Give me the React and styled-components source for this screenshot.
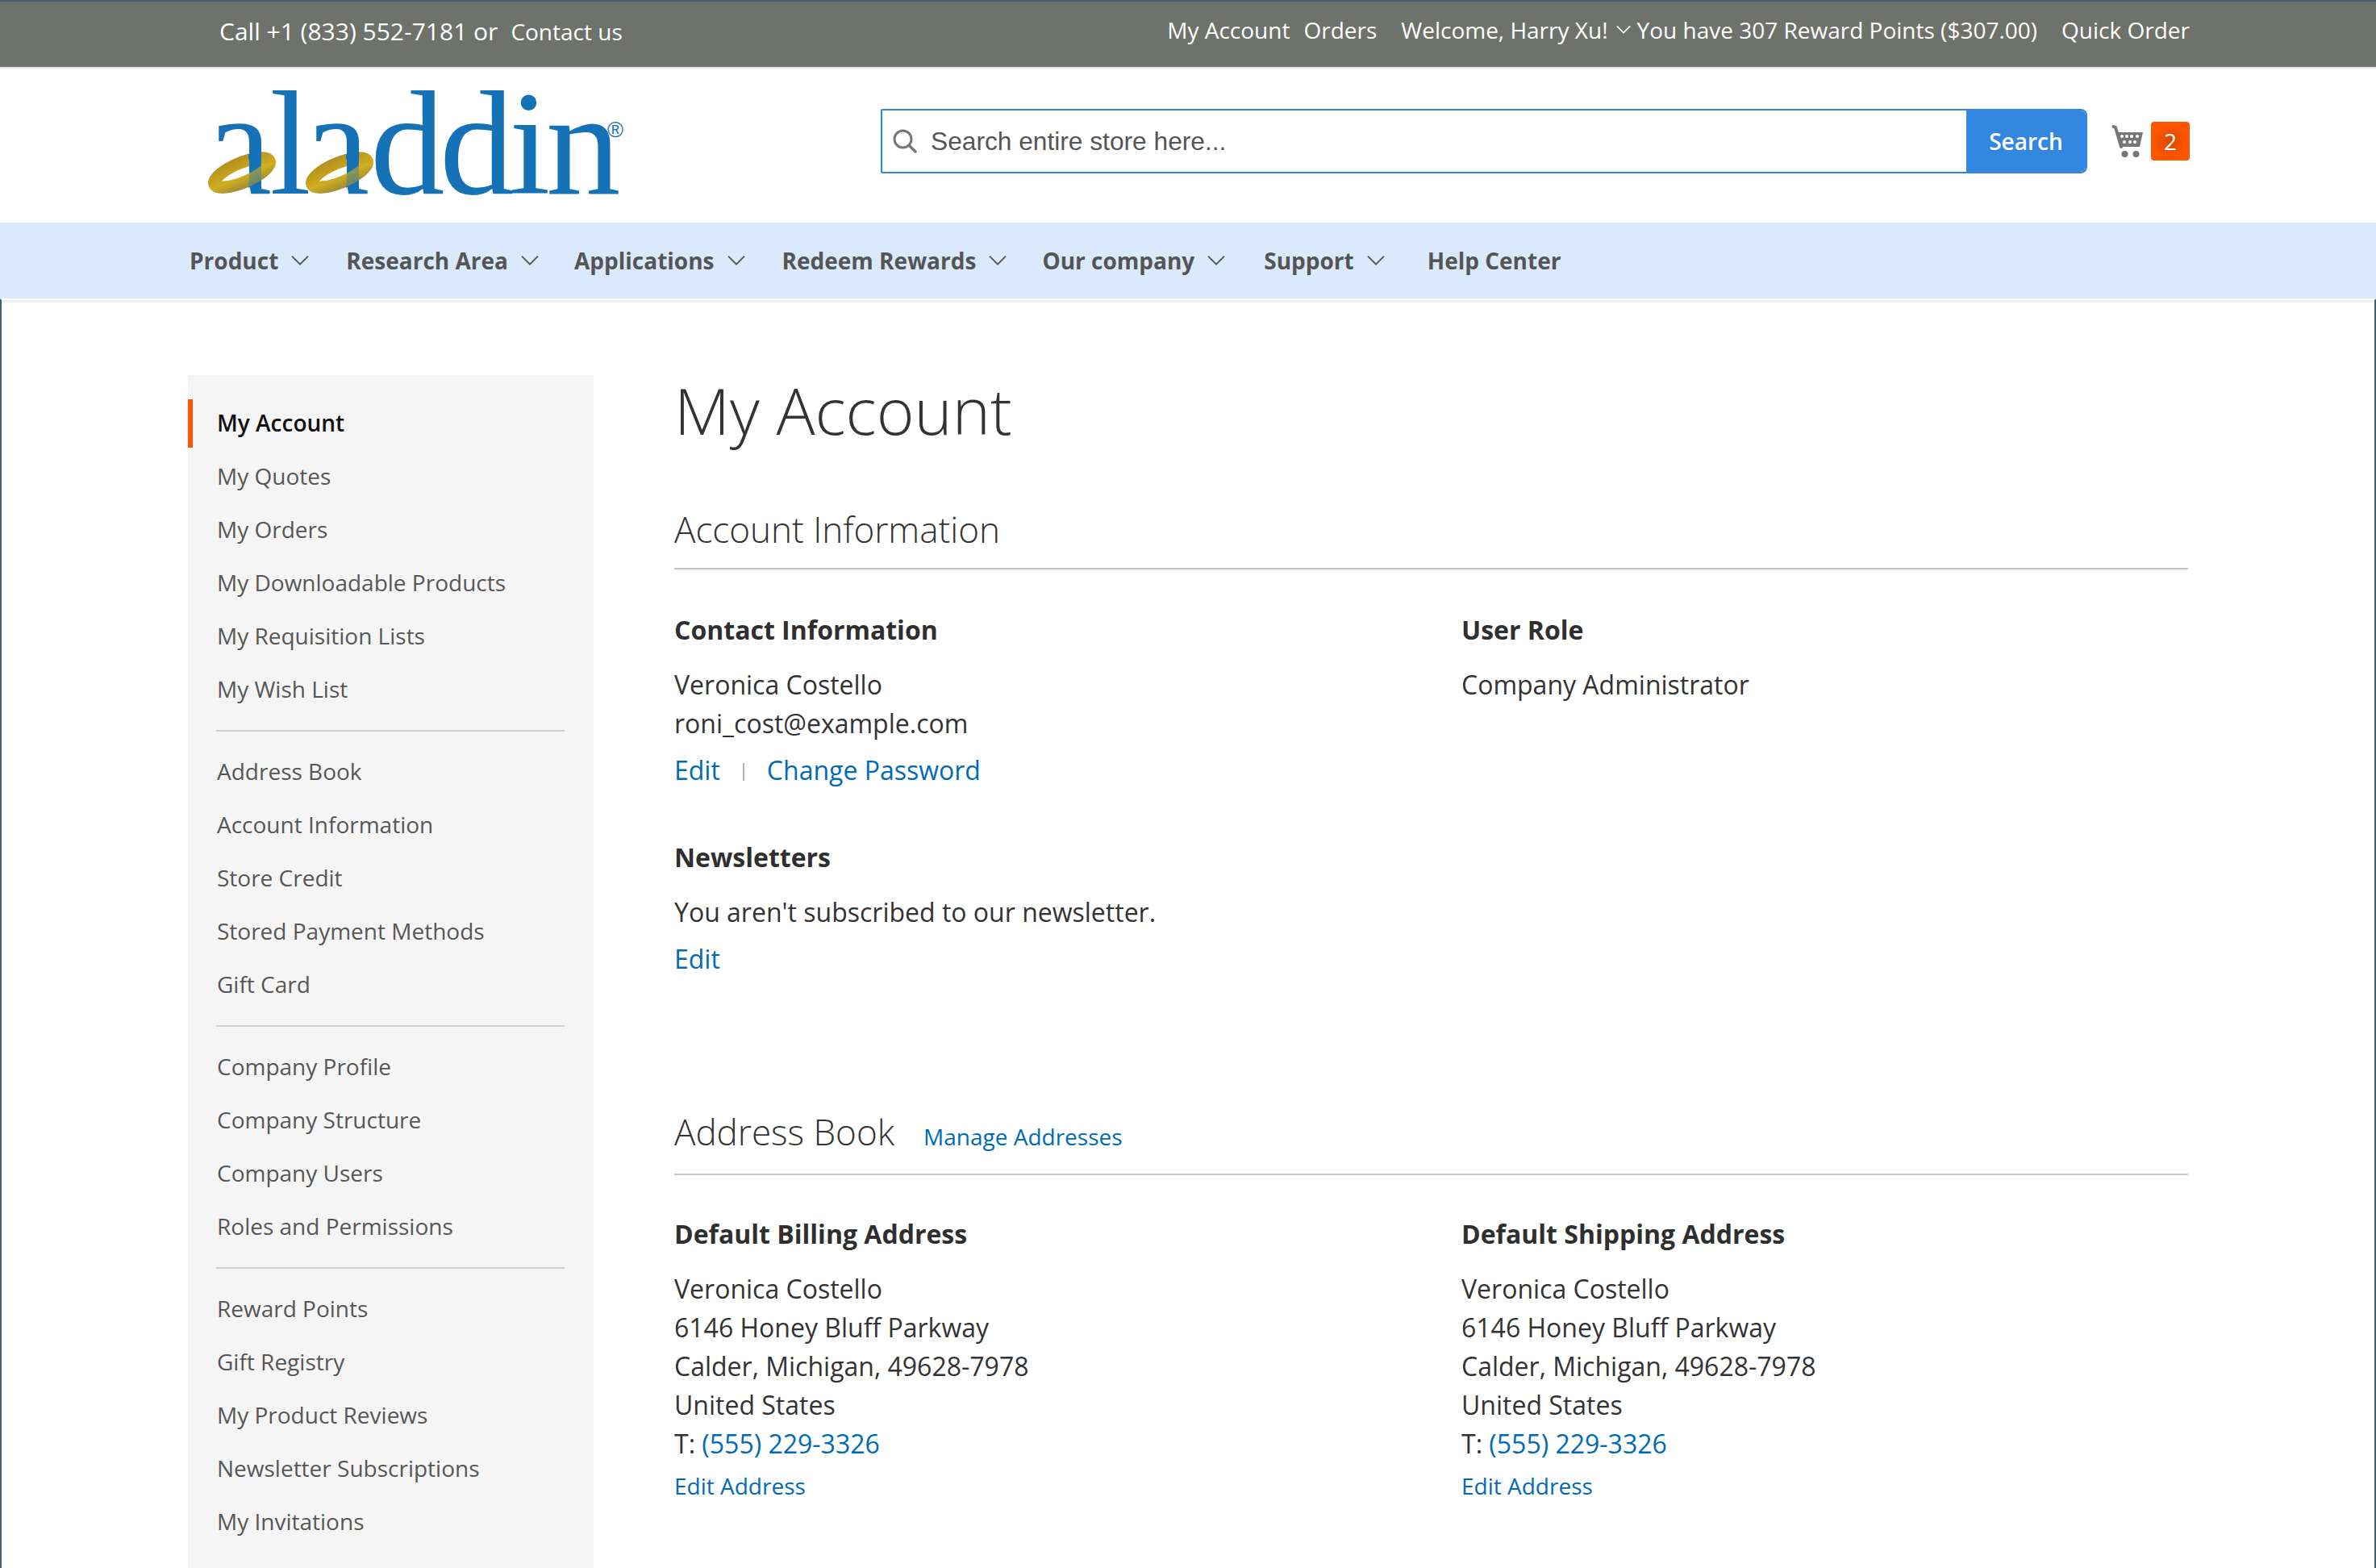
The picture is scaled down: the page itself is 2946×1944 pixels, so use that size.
import React from "react";
import styled, { createGlobalStyle } from "styled-components";

const GlobalStyle = createGlobalStyle`
  html, body {
    margin: 0;
    padding: 0;
    background: #fff;
    font-family: "Open Sans", "Liberation Sans", sans-serif;
    color: #333;
  }
  * { box-sizing: border-box; }
  a { text-decoration: none; }
`;

const Page = styled.div`
  width: 2946px;
  height: 1944px;
  overflow: hidden;
`;

const TopBar = styled.div`
  height: 85px;
  background: #6f716d;
  border-top: 2px solid #44606f;
  border-bottom: 2px solid #e9eae8;
  display: flex;
  align-items: center;
  justify-content: space-between;
  padding: 0 231px 8px 272px;
  color: #fff;
  font-size: 28px;
`;

const TopGroup = styled.div`
  display: flex;
  align-items: center;
  gap: ${(p) => p.$gap || 0}px;
`;

const TopLinks = styled(TopGroup)`
  margin-bottom: 4px;
`;

const Phone = styled.span`
  font-size: 30px;
  margin-right: 16px;
`;

const Points = styled.span`
  margin-left: 8px;
`;

const Header = styled.div`
  height: 191px;
  display: flex;
  align-items: flex-start;
  padding: 0 231px 0 250px;
`;

const LogoBox = styled.div`
  width: 530px;
  margin-right: 312px;
  flex: none;
`;

const SearchForm = styled.div`
  margin-top: 50px;
  width: 1496px;
  flex: none;
  height: 80px;
  display: flex;
  border: 2px solid #3487de;
  border-radius: 2px 8px 8px 2px;
  overflow: hidden;
`;

const SearchField = styled.div`
  flex: 1;
  display: flex;
  align-items: center;
  gap: 17px;
  padding: 0 13px;
  font-family: "Liberation Sans", Arial, sans-serif;
  font-size: 31.7px;
  color: #555;
`;

const SearchButton = styled.div`
  width: 148px;
  background: #3487de;
  color: #fff;
  font-size: 28px;
  font-weight: 600;
  display: flex;
  align-items: center;
  justify-content: center;
`;

const Cart = styled.div`
  margin-top: 66px;
  margin-left: 30px;
  display: flex;
  align-items: center;
  gap: 7px;
`;

const Badge = styled.div`
  width: 48px;
  height: 48px;
  background: radial-gradient(circle, #d84a02 0%, #ff5501 62%);
  border-radius: 4px;
  color: #fff;
  font-size: 28px;
  display: flex;
  align-items: center;
  justify-content: center;
`;

const Nav = styled.div`
  height: 94px;
  background: #dbe9fd;
  display: flex;
  align-items: center;
  padding: 0 0 0 235px;
`;

const NavItem = styled.div`
  display: flex;
  align-items: center;
  font-size: 28px;
  font-weight: 700;
  color: #555;
  margin-right: ${(p) => p.$gap}px;
`;

const Chevron = styled.svg`
  display: block;
  margin-left: ${(p) => p.$left}px;
`;

const Body = styled.div`
  position: relative;
  border-top: 2px solid #fff;
  display: flex;
  padding: 93px 231px 0 233px;
  border-left: 2px solid #44606f;
  border-right: 2px solid #44606f;
  height: 1574px;
  &::before {
    content: "";
    position: absolute;
    top: 0;
    left: 0;
    right: 0;
    height: 3px;
    background: #efefef;
  }
`;

const Sidebar = styled.div`
  width: 503px;
  flex: none;
  margin-left: -2px;
  background: #f5f5f5;
  padding: 30px 0 0;
  height: 1500px;
`;

const SideItem = styled.div`
  height: ${(p) => (p.$active ? 60 : 66)}px;
  margin-bottom: ${(p) => (p.$active ? 3 : 0)}px;
  display: flex;
  align-items: center;
  padding-left: ${(p) => (p.$active ? 30 : 36)}px;
  padding-bottom: 2px;
  border-left: ${(p) => (p.$active ? "6px solid #ff5501" : "none")};
  font-size: 28px;
  font-weight: ${(p) => (p.$active ? 600 : 400)};
  color: ${(p) => (p.$active ? "#111" : "#575757")};
`;

const SideRule = styled.div`
  height: 2px;
  background: #cfcfcf;
  margin: 17px 36px 17px 35px;
`;

const Main = styled.div`
  flex: 1;
  margin-left: 100px;
`;

const Title = styled.h1`
  margin: -7px 0 0;
  font-size: 80px;
  font-weight: 300;
  line-height: 100px;
  color: #333;
`;

const SectionHead = styled.div`
  display: flex;
  align-items: baseline;
  gap: 36px;
  border-bottom: 2px solid #c6c6c6;
  margin-top: ${(p) => p.$top}px;
  padding-bottom: ${(p) => p.$pad}px;
`;

const SectionTitle = styled.div`
  font-size: 44px;
  font-weight: 300;
  line-height: 56px;
`;

const SmallLink = styled.a`
  font-size: 28px;
  color: #006bb4;
`;

const Columns = styled.div`
  display: grid;
  grid-template-columns: 976px 1fr;
  margin-top: ${(p) => p.$top}px;
`;

const BoxTitle = styled.div`
  font-size: 32px;
  font-weight: 700;
  line-height: 44px;
  margin-bottom: 22px;
  color: #2f2f2f;
`;

const Line = styled.div`
  font-size: 32px;
  line-height: 48px;
  color: #333;
`;

const TextLink = styled.a`
  font-size: 32px;
  color: #006bb4;
`;

const Actions = styled.div`
  display: flex;
  align-items: center;
  font-size: 32px;
  line-height: 48px;
  margin-top: 10px;
`;

const Pipe = styled.span`
  width: 2px;
  height: 22px;
  background: #b4b4b4;
  margin: 4px 28px 0 28px;
`;

const Stacked = styled.div`
  margin-top: ${(p) => p.$top || 0}px;
`;

const EditAddress = styled.a`
  display: block;
  font-size: 28px;
  line-height: 40px;
  margin-top: 8px;
  color: #006bb4;
`;

const Ring = ({ cx, front }) => (
  <g transform={`rotate(-23 ${cx} 129)`} clipPath={front ? `url(#front${cx})` : undefined}>
    <ellipse
      cx={cx}
      cy="129"
      rx="37"
      ry="12"
      fill="none"
      stroke="url(#ring)"
      strokeWidth="15"
      opacity={front ? 0.62 : 1}
    />
  </g>
);

const Logo = () => (
  <svg width="530" height="191" viewBox="0 0 530 191" overflow="visible">
    <defs>
      <linearGradient id="ring" gradientUnits="userSpaceOnUse" x1="0" y1="106" x2="0" y2="152">
        <stop offset="0" stopColor="#b08a1c" />
        <stop offset="0.6" stopColor="#cfae20" />
        <stop offset="1" stopColor="#95843a" />
      </linearGradient>
      {/* the rings stand in for the bowls of the two a's */}
      <clipPath id="noBowls">
        <rect x="-10" y="-60" width="560" height="160" />
        <rect x="58" y="100" width="74" height="100" />
        <rect x="179" y="100" width="360" height="100" />
      </clipPath>
      <clipPath id="front50">
        <rect x="-10" y="129" width="120" height="40" />
      </clipPath>
      <clipPath id="front171">
        <rect x="111" y="129" width="120" height="40" />
      </clipPath>
    </defs>
    <Ring cx={50} />
    <Ring cx={171} />
    <text
      x="5 84.5 126 209 295 381 427"
      y="155"
      fontFamily="Liberation Serif, serif"
      fontSize="185"
      fill="#1572b6"
      clipPath="url(#noBowls)"
    >
      aladdin
    </text>
    <Ring cx={50} front />
    <Ring cx={171} front />
    <text x="503" y="85" fontFamily="Liberation Sans, sans-serif" fontSize="27" fill="#1572b6">®</text>
  </svg>
);

const SearchIcon = () => (
  <svg width="30" height="30" viewBox="0 0 30 30">
    <circle cx="12.5" cy="12.5" r="10.5" fill="none" stroke="#777" strokeWidth="3" />
    <path d="M20.5 20.5 L28 28" stroke="#777" strokeWidth="3.4" strokeLinecap="round" />
  </svg>
);

const CartIcon = () => (
  <svg width="42" height="42" viewBox="0 0 42 42">
    <path d="M2.5 3 L5 4 L12 28" fill="none" stroke="#777" strokeWidth="4" strokeLinecap="round" />
    <path d="M7 10 H39 L35 28 H12 Z" fill="#777" />
    <g fill="#fff">
      <circle cx="13" cy="15" r="2" /><circle cx="19" cy="15" r="2" /><circle cx="25" cy="15" r="2" /><circle cx="32" cy="15" r="2" />
      <circle cx="16" cy="22" r="2" /><circle cx="23" cy="22" r="2" /><circle cx="29" cy="22" r="2" />
    </g>
    <circle cx="16.5" cy="37" r="4" fill="#777" />
    <circle cx="30.5" cy="37" r="4" fill="#777" />
  </svg>
);

const Down = ({ left, size = 22, color = "#555" }) => (
  <Chevron $left={left} width={size} height={size * 0.6} viewBox="0 0 22 13">
    <path d="M1 1.5 L11 11.5 L21 1.5" fill="none" stroke={color} strokeWidth="2" />
  </Chevron>
);

const navItems = [
  ["Product", 46],
  ["Research Area", 44],
  ["Applications", 46],
  ["Redeem Rewards", 44],
  ["Our company", 48],
  ["Support", 53],
];

const sideGroups = [
  ["My Account", "My Quotes", "My Orders", "My Downloadable Products", "My Requisition Lists", "My Wish List"],
  ["Address Book", "Account Information", "Store Credit", "Stored Payment Methods", "Gift Card"],
  ["Company Profile", "Company Structure", "Company Users", "Roles and Permissions"],
  ["Reward Points", "Gift Registry", "My Product Reviews", "Newsletter Subscriptions", "My Invitations"],
];

const Address = ({ title }) => (
  <div>
    <BoxTitle>{title}</BoxTitle>
    <Line>Veronica Costello</Line>
    <Line>6146 Honey Bluff Parkway</Line>
    <Line>Calder, Michigan, 49628-7978</Line>
    <Line>United States</Line>
    <Line>T: <TextLink>(555) 229-3326</TextLink></Line>
    <EditAddress>Edit Address</EditAddress>
  </div>
);

const App = () => (
  <Page>
    <GlobalStyle />
    <TopBar>
      <TopGroup>
        <Phone>Call +1 (833) 552-7181 or</Phone>
        <span>Contact us</span>
      </TopGroup>
      <TopLinks $gap={30}>
        <TopGroup $gap={17}>
          <span>My Account</span>
          <span>Orders</span>
        </TopGroup>
        <TopGroup>
          <span>Welcome, Harry Xu!</span>
          <Down left={10} size={18} color="#fff" />
          <Points>You have 307 Reward Points ($307.00)</Points>
        </TopGroup>
        <span>Quick Order</span>
      </TopLinks>
    </TopBar>
    <Header>
      <LogoBox><Logo /></LogoBox>
      <SearchForm>
        <SearchField>
          <SearchIcon />
          <span>Search entire store here...</span>
        </SearchField>
        <SearchButton>Search</SearchButton>
      </SearchForm>
      <Cart>
        <CartIcon />
        <Badge>2</Badge>
      </Cart>
    </Header>
    <Nav>
      {navItems.map(([label, gap]) => (
        <NavItem key={label} $gap={gap}>
          {label}
          <Down left={16} />
        </NavItem>
      ))}
      <NavItem $gap={0}>Help Center</NavItem>
    </Nav>
    <Body>
      <Sidebar>
        {sideGroups.map((group, i) => (
          <div key={i}>
            {i > 0 && <SideRule />}
            {group.map((item) => (
              <SideItem key={item} $active={item === "My Account"}>{item}</SideItem>
            ))}
          </div>
        ))}
      </Sidebar>
      <Main>
        <Title>My Account</Title>
        <SectionHead $top={70} $pad={20}>
          <SectionTitle>Account Information</SectionTitle>
        </SectionHead>
        <Columns $top={53}>
          <div>
            <BoxTitle>Contact Information</BoxTitle>
            <Line>Veronica Costello</Line>
            <Line>roni_cost@example.com</Line>
            <Actions>
              <TextLink>Edit</TextLink>
              <Pipe />
              <TextLink>Change Password</TextLink>
            </Actions>
            <Stacked $top={62}>
              <BoxTitle>Newsletters</BoxTitle>
              <Line>You aren't subscribed to our newsletter.</Line>
              <Actions><TextLink>Edit</TextLink></Actions>
            </Stacked>
          </div>
          <div>
            <BoxTitle>User Role</BoxTitle>
            <Line>Company Administrator</Line>
          </div>
        </Columns>
        <SectionHead $top={162} $pad={24}>
          <SectionTitle>Address Book</SectionTitle>
          <SmallLink>Manage Addresses</SmallLink>
        </SectionHead>
        <Columns $top={51}>
          <Address title="Default Billing Address" />
          <Address title="Default Shipping Address" />
        </Columns>
      </Main>
    </Body>
  </Page>
);

export default App;
